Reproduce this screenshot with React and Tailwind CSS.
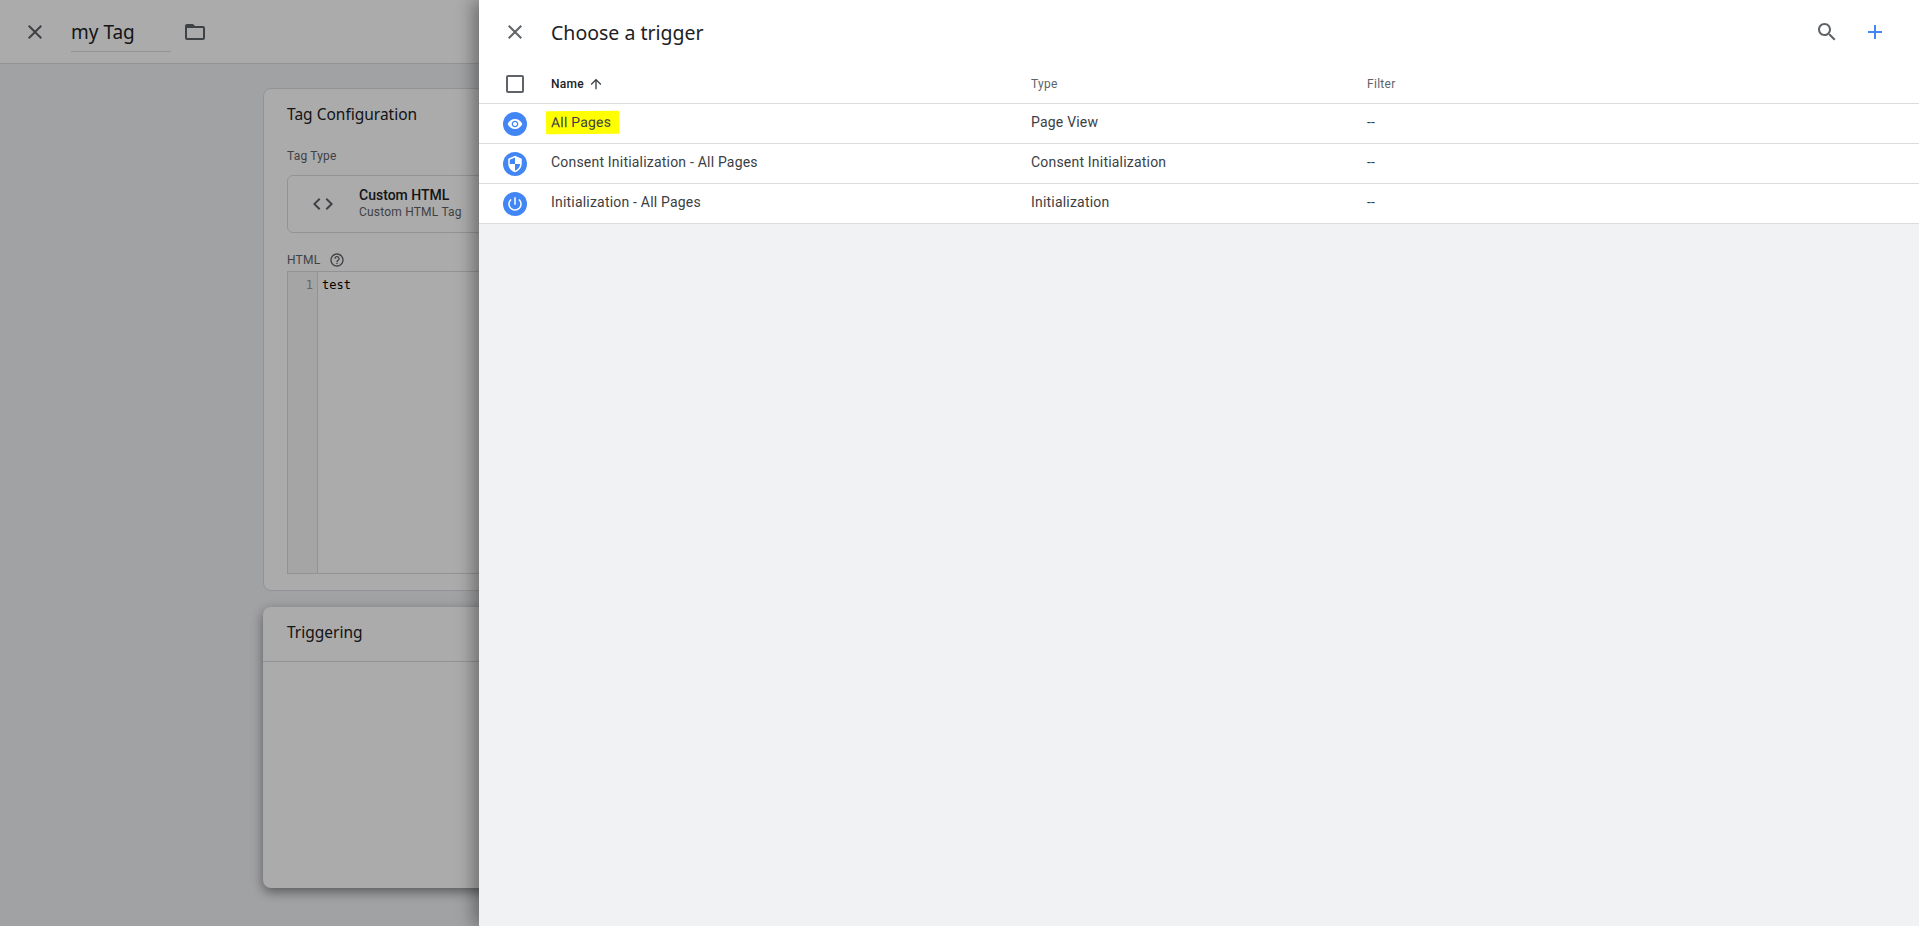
const PATHS = {
  close: "M19 6.41L17.59 5 12 10.59 6.41 5 5 6.41 10.59 12 5 17.59 6.41 19 12 13.41 17.59 19 19 17.59 13.41 12z",
  folder: "M20 6h-8l-2-2H4c-1.1 0-1.99.9-1.99 2L2 18c0 1.1.9 2 2 2h16c1.1 0 2-.9 2-2V8c0-1.1-.9-2-2-2zm0 12H4V8h16v10z",
  code: "M9.4 16.6L4.8 12l4.6-4.6L8 6l-6 6 6 6 1.4-1.4zm5.2 0l4.6-4.6-4.6-4.6L16 6l6 6-6 6-1.4-1.4z",
  help: "M11 18h2v-2h-2v2zm1-16C6.48 2 2 6.48 2 12s4.48 10 10 10 10-4.48 10-10S17.52 2 12 2zm0 18c-4.41 0-8-3.59-8-8s3.59-8 8-8 8 3.59 8 8-3.59 8-8 8zm0-14c-2.21 0-4 1.79-4 4h2c0-1.1.9-2 2-2s2 .9 2 2c0 2-3 1.75-3 5h2c0-2.25 3-2.5 3-5 0-2.21-1.79-4-4-4z",
  search: "M15.5 14h-.79l-.28-.27C15.41 12.59 16 11.11 16 9.5 16 5.91 13.09 3 9.5 3S3 5.91 3 9.5 5.91 16 9.5 16c1.61 0 3.09-.59 4.23-1.57l.27.28v.79l5 4.99L20.49 19l-4.99-5zm-6 0C7.01 14 5 11.99 5 9.5S7.01 5 9.5 5 14 7.01 14 9.5 11.99 14 9.5 14z",
  add: "M19 13h-6v6h-2v-6H5v-2h6V5h2v6h6v2z",
  up: "M4 12l1.41 1.41L11 7.83V20h2V7.83l5.58 5.59L20 12l-8-8-8 8z",
  eye: "M12 4.5C7 4.5 2.73 7.61 1 12c1.73 4.39 6 7.5 11 7.5s9.27-3.11 11-7.5c-1.73-4.39-6-7.5-11-7.5zM12 17c-2.76 0-5-2.24-5-5s2.24-5 5-5 5 2.24 5 5-2.24 5-5 5zm0-8c-1.66 0-3 1.34-3 3s1.34 3 3 3 3-1.34 3-3-1.34-3-3-3z",
  shield: "M12 1L3 5v6c0 5.55 3.84 10.74 9 12 5.16-1.26 9-6.45 9-12V5l-9-4zm0 10.99h7c-.53 4.12-3.28 7.79-7 8.94V12H5V6.3l7-3.11v8.8z",
  power: "M13 3h-2v10h2V3zm4.83 2.17l-1.42 1.42C17.99 7.86 19 9.81 19 12c0 3.87-3.13 7-7 7s-7-3.13-7-7c0-2.19 1.01-4.14 2.58-5.42L6.17 5.17C4.23 6.82 3 9.26 3 12c0 4.97 4.03 9 9 9s9-4.03 9-9c0-2.74-1.23-5.18-3.17-6.83z",
};

function Icon({ name, className }) {
  return (
    <svg viewBox="0 0 24 24" fill="currentColor" className={className}>
      <path d={PATHS[name]} />
    </svg>
  );
}

const triggers = [
  { name: "All Pages", type: "Page View", icon: "eye", size: "w-4 h-4" },
  { name: "Consent Initialization - All Pages", type: "Consent Initialization", icon: "shield", size: "w-[18px] h-[18px]" },
  { name: "Initialization - All Pages", type: "Initialization", icon: "power", size: "w-[18px] h-[18px]" },
];

function TagEditor() {
  return (
    <div className="h-[926px] flex flex-col bg-[#f1f2f5]">
      <div className="h-[64px] shrink-0 flex items-center bg-white border-b border-[#dadce0]">
        <Icon name="close" className="w-6 h-6 ml-[23px] text-[#5f6368]" />
        <div className="ml-[24px] w-[100px] h-[38px] mt-[2px] flex items-center border-b border-[#dadce0] text-[19px] text-[#202124] font-['Noto_Sans',sans-serif]">my Tag</div>
        <Icon name="folder" className="w-6 h-6 ml-[12px] text-[#5f6368]" />
      </div>
      <div className="pl-[263px] pt-[24px] flex flex-col gap-[16px] w-[1700px]">
        <div className="h-[503px] bg-white border border-[#dadce0] rounded-lg px-[23px]">
          <div className="mt-[15px] text-[15.5px] leading-5 text-[#202124] font-['Noto_Sans',sans-serif]">Tag Configuration</div>
          <div className="mt-[24px] text-xs leading-4 tracking-[0.2px] text-[#5f6368]">Tag Type</div>
          <div className="mt-[11px] h-[58px] border border-[#dadce0] rounded-md flex items-center">
            <Icon name="code" className="w-6 h-6 ml-[23px] text-[#5f6368]" />
            <div className="ml-[24px] pb-[2px]">
              <div className="text-sm leading-[17px] font-medium text-[#202124]">Custom HTML</div>
              <div className="text-xs leading-4 tracking-[0.2px] text-[#5f6368]">Custom HTML Tag</div>
            </div>
          </div>
          <div className="mt-[15px] h-[23px] flex items-center gap-[9px] text-xs tracking-[0.2px] text-[#5f6368]">
            HTML
            <Icon name="help" className="w-4 h-4" />
          </div>
          <div className="h-[303px] border border-[#dadce0] flex pt-[2px] font-['DejaVu_Sans_Mono',monospace] text-[12px] leading-[22px]">
            <div className="w-[30px] -mt-[2px] pt-[2px] bg-[#f7f7f7] border-r border-[#dadce0] text-right pr-[4px] text-[#999999]">1</div>
            <div className="pl-[4px] text-black">test</div>
          </div>
        </div>
        <div className="h-[281px] bg-white rounded-lg shadow-[0_4px_12px_rgba(0,0,0,0.45)]">
          <div className="h-[55px] border-b border-[#dadce0] pl-[24px] pb-[2px] flex items-center text-[15.5px] text-[#202124] font-['Noto_Sans',sans-serif]">Triggering</div>
        </div>
      </div>
    </div>
  );
}

function TriggerPanel() {
  return (
    <div className="absolute top-0 right-0 bottom-0 w-[1440px] flex flex-col bg-[#f1f2f4] shadow-[-6px_0_16px_rgba(0,0,0,0.35)]">
      <div className="bg-white">
        <div className="h-[64px] flex items-center">
          <Icon name="close" className="w-6 h-6 ml-[24px] text-[#5f6368]" />
          <h1 className="ml-[24px] text-[19.5px] pt-[2px] text-[#202124] font-['Noto_Sans',sans-serif]">Choose a trigger</h1>
          <Icon name="search" className="w-6 h-6 ml-auto text-[#5f6368]" />
          <Icon name="add" className="w-6 h-6 ml-[24px] mr-[32px] text-[#4285f4]" />
        </div>
        <div className="h-[40px] flex items-center border-b border-[#dadce0] text-xs tracking-[0.3px]">
          <div className="w-[72px] pl-[27px]">
            <div className="w-[18px] h-[18px] border-2 border-[#5f6368] rounded-[2px]" />
          </div>
          <div className="w-[480px] flex items-center gap-[4px] font-medium text-[#202124]">
            Name
            <Icon name="up" className="w-4 h-4 text-[#3c4043]" />
          </div>
          <div className="w-[336px] text-[#5f6368]">Type</div>
          <div className="text-[#5f6368]">Filter</div>
        </div>
        {triggers.map((t, i) => (
          <div key={t.name} className="h-[40px] flex items-center border-b border-[#dadce0] text-[14px] tracking-[0.2px] text-[#3c4043]">
            <div className="w-[72px] pl-[24px]">
              <div className="w-6 h-6 rounded-full bg-[#4285f4] flex items-center justify-center">
                <Icon name={t.icon} className={`${t.size} text-white`} />
              </div>
            </div>
            <div className="w-[480px] pb-[2px]">
              {i === 0 ? (
                <span className="inline-block bg-[#ffff00] pl-[5px] pr-[8px] py-[1px] -ml-[5px] -rotate-[0.5deg]">{t.name}</span>
              ) : (
                t.name
              )}
            </div>
            <div className="w-[336px] pb-[2px]">{t.type}</div>
            <div className="pb-[2px]">--</div>
          </div>
        ))}
      </div>
    </div>
  );
}

export default function App() {
  return (
    <div className="relative h-[926px] overflow-hidden font-['Roboto',sans-serif]">
      <TagEditor />
      <div className="absolute inset-0 bg-black/33" />
      <TriggerPanel />
    </div>
  );
}
